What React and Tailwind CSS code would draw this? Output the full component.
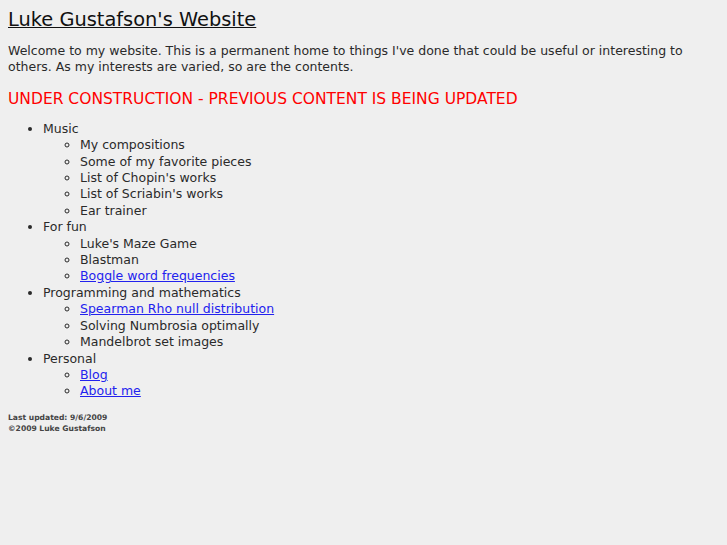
const sections = [
  {
    title: "Music",
    items: [
      { text: "My compositions" },
      { text: "Some of my favorite pieces" },
      { text: "List of Chopin's works" },
      { text: "List of Scriabin's works" },
      { text: "Ear trainer" },
    ],
  },
  {
    title: "For fun",
    items: [
      { text: "Luke's Maze Game" },
      { text: "Blastman" },
      { text: "Boggle word frequencies", link: true },
    ],
  },
  {
    title: "Programming and mathematics",
    items: [
      { text: "Spearman Rho null distribution", link: true },
      { text: "Solving Numbrosia optimally" },
      { text: "Mandelbrot set images" },
    ],
  },
  {
    title: "Personal",
    items: [
      { text: "Blog", link: true },
      { text: "About me", link: true },
    ],
  },
];

export default function App() {
  return (
    <div className="min-h-[545px] bg-[#efefef] p-2 text-[12.5px] leading-[16.4px] text-[#2a2a2a] font-['DejaVu_Sans',sans-serif]">
      <h1 className="mt-[1px] text-[19.4px] leading-[22px] underline text-[#111]">Luke Gustafson's Website</h1>
      <p className="mt-[12px]">
        Welcome to my website. This is a permanent home to things I've done that could be useful or interesting to
        others. As my interests are varied, so are the contents.
      </p>
      <h2 className="mt-[14px] text-[15.5px] leading-[19px] text-[#ff0000]">
        UNDER CONSTRUCTION - PREVIOUS CONTENT IS BEING UPDATED
      </h2>
      <ul className="mt-[12px] list-disc pl-[35px]">
        {sections.map((s) => (
          <li key={s.title}>
            {s.title}
            <ul className="list-[circle] pl-[37px]">
              {s.items.map((it) => (
                <li key={it.text}>
                  {it.link ? (
                    <a href="#" className="text-[#2222ee] underline">{it.text}</a>
                  ) : (
                    it.text
                  )}
                </li>
              ))}
            </ul>
          </li>
        ))}
      </ul>
      <div className="mt-[12px] text-[7.6px] leading-[11px] font-bold text-[#444]">
        <div>Last updated: 9/6/2009</div>
        <div>©2009 Luke Gustafson</div>
      </div>
    </div>
  );
}
